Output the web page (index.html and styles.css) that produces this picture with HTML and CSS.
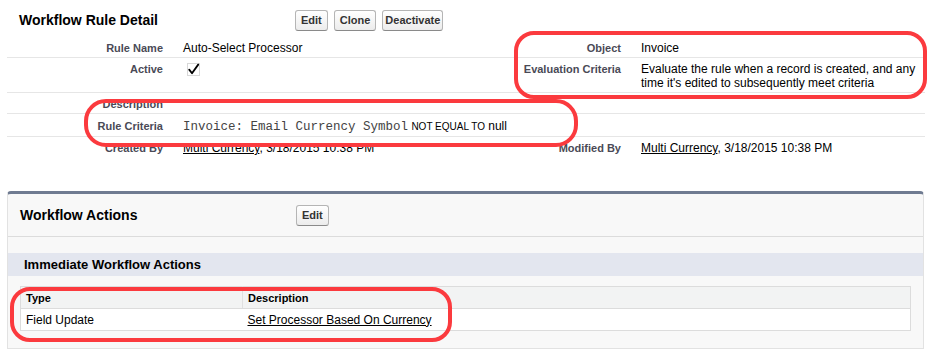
FILE: index.html
```html
<!DOCTYPE html>
<html>
<head>
<meta charset="utf-8">
<link rel="stylesheet" href="styles.css">
</head>
<body>
<div class="page">
  <section class="detail">
    <div class="detail-head">
      <h2 class="title">Workflow Rule Detail</h2>
      <div class="btns">
        <button class="btn">Edit</button>
        <button class="btn">Clone</button>
        <button class="btn btn-tight">Deactivate</button>
      </div>
    </div>
    <div class="fields">
      <div class="lbl">Rule Name</div>
      <div class="val">Auto-Select Processor</div>
      <div class="lbl">Object</div>
      <div class="val">Invoice</div>

      <div class="lbl">Active</div>
      <div class="val">
        <svg class="check" width="13" height="13" viewBox="0 0 13 13">
          <rect x="0.5" y="0.5" width="12" height="12" fill="none" stroke="#b0b0b0" stroke-width="1" stroke-dasharray="1 1"/>
          <path d="M2.2 6.6 L5 10.2 L11.2 1.6" fill="none" stroke="#000" stroke-width="1.8" stroke-linecap="round" stroke-linejoin="round"/>
        </svg>
      </div>
      <div class="lbl">Evaluation Criteria</div>
      <div class="val wide">Evaluate the rule when a record is created, and any time it's edited to subsequently meet criteria</div>

      <div class="lbl">Description</div>
      <div class="val"></div>
      <div class="lbl"></div>
      <div class="val"></div>

      <div class="lbl row4">Rule Criteria</div>
      <div class="val row4 crit"><span class="mono">Invoice: Email Currency Symbol</span> <span class="op">NOT EQUAL TO</span> null</div>
      <div class="lbl row4"></div>
      <div class="val row4"></div>

      <div class="lbl last">Created By</div>
      <div class="val last"><a class="lnk" href="#">Multi Currency</a>, 3/18/2015 10:38 PM</div>
      <div class="lbl last">Modified By</div>
      <div class="val last"><a class="lnk" href="#">Multi Currency</a>, 3/18/2015 10:38 PM</div>
    </div>
  </section>

  <section class="panel">
    <div class="panel-head">
      <h2 class="title">Workflow Actions</h2>
      <button class="btn">Edit</button>
    </div>
    <div class="panel-body">
      <h3 class="band">Immediate Workflow Actions</h3>
      <table class="list">
        <thead>
          <tr><th class="c1">Type</th><th>Description</th></tr>
        </thead>
        <tbody>
          <tr><td class="c1">Field Update</td><td><a class="lnk" href="#">Set Processor Based On Currency</a></td></tr>
        </tbody>
      </table>
    </div>
  </section>

  <div class="callout callout-obj"></div>
  <div class="callout callout-crit"></div>
  <div class="callout callout-table"></div>
</div>
</body>
</html>
```
FILE: styles.css
```css
* { box-sizing: border-box; }
html, body { margin: 0; padding: 0; background: #fff; }
body {
  font-family: "Liberation Sans", Arial, Helvetica, sans-serif;
  font-size: 12px;
  color: #000;
}
.page { position: relative; width: 933px; height: 349px; overflow: hidden; }

.detail { padding: 0 8px 0 7px; height: 191px; }
.detail-head {
  display: flex;
  align-items: flex-start;
  height: 37px;
  padding-top: 10px;
  padding-left: 12px;
}
.title {
  margin: 0;
  font-size: 14px;
  font-weight: bold;
  line-height: 21px;
  width: 276px;
  color: #000;
}
.btns { display: flex; gap: 6px; }
.btn {
  font-family: "Liberation Sans", Arial, sans-serif;
  font-size: 11px;
  font-weight: bold;
  color: #333;
  height: 21px;
  padding: 0 5px;
  border: 1px solid #b5b5b5;
  border-bottom-color: #8a8a8a;
  border-radius: 3px;
  background: linear-gradient(#ffffff, #ececec);
  line-height: 19px;
  margin: 0;
}
.btn-tight { padding: 0 2px; }

.fields {
  display: grid;
  grid-template-columns: 166px 332px 126px 294px;
}
.lbl, .val {
  padding: 4px 10px 2px 10px;
  line-height: 14px;
  border-bottom: 1px solid #e6e6e6;
}
.lbl {
  text-align: right;
  font-weight: bold;
  font-size: 11px;
  color: #4a4a56;
}
.val { font-size: 12px; color: #000; }
.val.wide { padding-right: 0; }
.row4 { padding-top: 5px; }
.last { border-bottom: none; padding-top: 4px; }
.check { display: block; margin: 1px 0 0 4px; }
.crit { white-space: nowrap; overflow: visible; color: #000; }
.mono { font-family: "Liberation Mono", "Courier New", monospace; font-size: 12.5px; color: #444; }
.op { font-size: 10px; color: #000; }
.lnk { color: #000; text-decoration: underline; }

.panel {
  margin: 0 9px 0 7px;
  height: 158px;
  background: #f8f8f8;
  border-top: 3px solid #6f7b91;
  border-left: 1px solid #e2e2e2;
  border-right: 1px solid #e2e2e2;
  border-bottom: 1px solid #e2e2e2;
  border-radius: 4px 4px 0 0;
}
.panel-head {
  display: flex;
  align-items: flex-start;
  padding: 11px 12px 10px 12px;
  border-bottom: 1px solid #dcdcdc;
}
.panel-body { padding-top: 16px; }
.band {
  margin: 0;
  background: #e3e6ef;
  font-size: 13px;
  font-weight: bold;
  line-height: 23px;
  height: 23px;
  padding-left: 16px;
  color: #000;
}
.list {
  margin: 10px 12px 0 12px;
  width: calc(100% - 24px);
  border-collapse: collapse;
  border: 1px solid #dcdcdc;
  background: #fff;
}
.list th {
  text-align: left;
  font-size: 11px;
  font-weight: bold;
  color: #000;
  background: #f2f3f3;
  height: 22px;
  padding: 0 5px;
  border-bottom: 1px solid #dcdcdc;
}
.list th.c1 { border-right: 1px solid #e0e0e0; }
.list td {
  font-size: 12px;
  height: 22px;
  padding: 0 5px;
}
.list .c1 { width: 222px; }

.callout {
  position: absolute;
  border: 4px solid #fb3a3e;
  pointer-events: none;
}
.callout-obj { left: 514px; top: 31px; width: 413px; height: 68px; border-radius: 20px; }
.callout-crit { left: 84px; top: 99px; width: 494px; height: 48px; border-radius: 22px; }
.callout-table { left: 10px; top: 287px; width: 442px; height: 55px; border-radius: 20px; }
```
